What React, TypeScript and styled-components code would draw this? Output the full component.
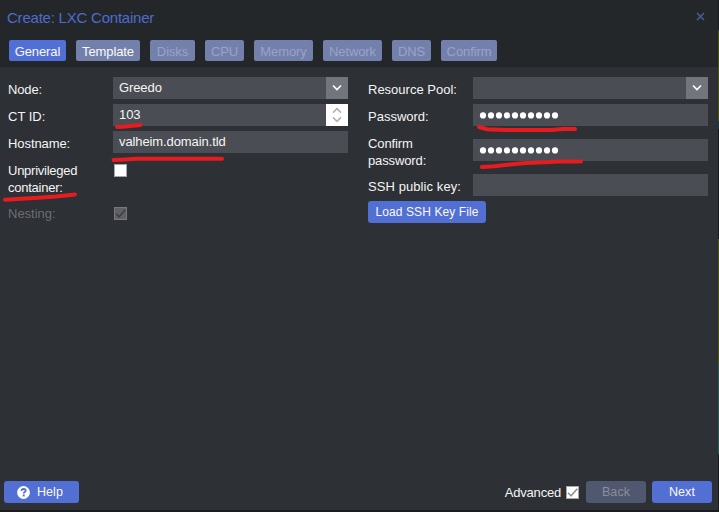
import React from "react";
import styled, { createGlobalStyle } from "styled-components";

const GlobalStyle = createGlobalStyle`
  * { box-sizing: border-box; }
  body { margin: 0; background: #1c1b20; }
  button { font: inherit; border: 0; padding: 0; }
`;

const Screen = styled.div`
  position: relative;
  display: flex;
  width: 719px;
  height: 512px;
  overflow: hidden;
  font: 13px/17px "Liberation Sans", Arial, sans-serif;
  color: #f5f5f5;
  white-space: nowrap;
`;

const Dialog = styled.div`
  display: flex;
  flex-direction: column;
  width: 718px;
  height: 510px;
  background: #2d3035;
`;

const Backdrop = styled.div`
  width: 1px;
  background: linear-gradient(
    #191b20 0 30px, #4c5011 30px 121px, #123c54 121px 129px, #191c1e 129px 239px,
    #50520f 239px 364px, #2b5959 364px 454px, #181b1d 454px
  );
`;

const Header = styled.header`
  display: flex;
  flex-direction: column;
  height: 67px;
  background: #23272a;
`;

const TitleBar = styled.div`
  display: flex;
  justify-content: space-between;
  height: 40px;
  padding: 9px 13px 0 7px;
  font-size: 15px;
  line-height: 18px;
  letter-spacing: -0.22px;
  color: #4f6bcd;
`;

const CloseIcon = styled.svg`
  width: 9px;
  height: 9px;
  margin-top: 3px;
`;

const Tabs = styled.nav`
  display: flex;
  gap: 10px;
  padding-left: 9px;
`;

type TabState = "active" | "ready" | "disabled";

const Tab = styled.button<{ $state: TabState; $width: number }>`
  width: ${(p) => p.$width}px;
  height: 21px;
  padding-top: 2px;
  border-radius: 2px;
  line-height: 19px;
  letter-spacing: -0.1px;
  background: ${(p) => (p.$state === "active" ? "#526fd6" : "#7480ac")};
  color: ${(p) => (p.$state === "disabled" ? "#9aa3c6" : "#fafafa")};
`;

const Form = styled.main`
  display: grid;
  grid-template-columns: 340px 340px;
  column-gap: 20px;
  align-content: start;
  flex: 1;
  padding: 10px 0 0 8px;
`;

const Column = styled.div`
  display: flex;
  flex-direction: column;
  gap: 5px;
`;

const Row = styled.div<{ $dim?: boolean }>`
  display: grid;
  grid-template-columns: 105px 235px;
  align-items: center;
  min-height: 22px;
  color: ${(p) => (p.$dim ? "#6b6d70" : "#f5f5f5")};
`;

const Label = styled.label<{ $tall?: boolean; $spacing?: number }>`
  align-self: start;
  height: ${(p) => (p.$tall ? 38 : 22)}px;
  padding-top: 4px;
  letter-spacing: ${(p) => p.$spacing ?? 0}px;
`;

const Field = styled.div`
  display: flex;
  height: 22px;
  background: #4b4d54;
`;

const Value = styled.span`
  flex: 1;
  padding: 2px 0 0 6px;
  letter-spacing: -0.1px;
`;

const Trigger = styled.button<{ $light?: boolean }>`
  display: flex;
  width: 22px;
  height: 22px;
  background: ${(p) => (p.$light ? "#ffffff" : "#72757b")};
`;

const Dots = styled.svg`
  width: 92px;
  height: 22px;
  fill: #fff;
`;

const Box = styled.span<{ $dim?: boolean; $inField?: boolean }>`
  display: flex;
  align-self: start;
  width: 13px;
  height: 13px;
  margin: ${(p) => (p.$inField ? "6px 0 0 1px" : "0")};
  border: 1px solid ${(p) => (p.$dim ? "#77787b" : "#a6a6a6")};
  background: ${(p) => (p.$dim ? "#5f6164" : "#fff")};
`;

const Action = styled.button<{ $width: number; $disabled?: boolean }>`
  display: flex;
  align-items: center;
  justify-content: center;
  width: ${(p) => p.$width}px;
  height: 22px;
  border-radius: 3px;
  font-size: 12px;
  line-height: 22px;
  letter-spacing: 0.1px;
  background: ${(p) => (p.$disabled ? "#50586f" : "#526fd3")};
  color: ${(p) => (p.$disabled ? "#8b8e98" : "#fafafa")};
`;

const HelpIcon = styled.svg`
  width: 13px;
  height: 13px;
  margin: 0 7px 0 -3px;
`;

const Footer = styled.footer`
  display: flex;
  align-items: flex-start;
  height: 29px;
  padding: 0 6px 0 4px;
`;

const Advanced = styled.label`
  display: flex;
  gap: 5px;
  margin: 3px 7px 0 auto;
  letter-spacing: -0.2px;

  ${Box} { margin-top: 2px; }
`;

const WideAction = styled(Action)`
  font-size: 12.5px;
  letter-spacing: 0.1px;
`;

const Next = styled(WideAction)`
  margin-left: 6px;
`;

const Underlines = styled.svg`
  position: absolute;
  inset: 0;
  width: 719px;
  height: 512px;
  pointer-events: none;
`;

const tabs: { name: string; width: number; state: TabState }[] = [
  { name: "General", width: 57, state: "active" },
  { name: "Template", width: 64, state: "ready" },
  { name: "Disks", width: 45, state: "disabled" },
  { name: "CPU", width: 39, state: "disabled" },
  { name: "Memory", width: 59, state: "disabled" },
  { name: "Network", width: 59, state: "disabled" },
  { name: "DNS", width: 39, state: "disabled" },
  { name: "Confirm", width: 56, state: "disabled" },
];

const Chevron = () => (
  <svg width="22" height="22" fill="none" stroke="#fff" strokeWidth="1.6">
    <path d="M7 8.5l4 4 4-4" />
  </svg>
);

const Spinner = () => (
  <svg width="22" height="22" fill="none" stroke="#b2b2b2" strokeWidth="1.5">
    <path d="M7 8.6l4-4 4 4M7 13.4l4 4 4-4" />
  </svg>
);

const Check = ({ color }: { color: string }) => (
  <svg width="11" height="11" fill="none" stroke={color} strokeWidth="1.6">
    <path d="M1 5.8l3 3L10.300 1.8" />
  </svg>
);

const Password = () => (
  <Field>
    <Dots>
      {Array.from({ length: 10 }, (_, i) => (
        <circle key={i} cx={10 + i * 8} cy={11.4} r={3.1} />
      ))}
    </Dots>
  </Field>
);

export default function App() {
  return (
    <Screen>
      <GlobalStyle />
      <Dialog>
        <Header>
          <TitleBar>
            <span>Create: LXC Container</span>
            <CloseIcon viewBox="0 0 9 9" stroke="#4a5d9d" strokeWidth="1.5">
              <path d="M1 1l7 7M8 1L1 8" />
            </CloseIcon>
          </TitleBar>
          <Tabs>
            {tabs.map((t) => (
              <Tab key={t.name} $width={t.width} $state={t.state}>{t.name}</Tab>
            ))}
          </Tabs>
        </Header>
        <Form>
          <Column>
            <Row>
              <Label $spacing={-0.15}>Node:</Label>
              <Field><Value>Greedo</Value><Trigger><Chevron /></Trigger></Field>
            </Row>
            <Row>
              <Label>CT ID:</Label>
              <Field><Value>103</Value><Trigger $light><Spinner /></Trigger></Field>
            </Row>
            <Row>
              <Label $spacing={-0.08}>Hostname:</Label>
              <Field><Value>valheim.domain.tld</Value></Field>
            </Row>
            <Row>
              <Label $tall $spacing={-0.25}>Unprivileged<br />container:</Label>
              <Box $inField />
            </Row>
            <Row $dim>
              <Label>Nesting:</Label>
              <Box $dim $inField><Check color="#3c3f42" /></Box>
            </Row>
          </Column>
          <Column>
            <Row>
              <Label>Resource Pool:</Label>
              <Field><Value /><Trigger><Chevron /></Trigger></Field>
            </Row>
            <Row>
              <Label>Password:</Label>
              <Password />
            </Row>
            <Row>
              <Label $tall $spacing={-0.12}>Confirm<br />password:</Label>
              <Password />
            </Row>
            <Row>
              <Label $spacing={0.08}>SSH public key:</Label>
              <Field />
            </Row>
            <Action $width={118}>Load SSH Key File</Action>
          </Column>
        </Form>
        <Footer>
          <WideAction $width={75}>
            <HelpIcon viewBox="0 0 13 13">
              <circle cx="6.5" cy="6.5" r="6.4" fill="#fff" />
              <path d="M4.4 4.9c.2-1.3 1-1.9 2.2-1.9 1.3 0 2.1.7 2.1 1.7 0 1.4-2 1.3-2 2.8" fill="none" stroke="#526fd3" strokeWidth="1.8" />
              <path d="M5.7 8.5h2v1.9h-2z" fill="#526fd3" />
            </HelpIcon>
            Help
          </WideAction>
          <Advanced>Advanced<Box><Check color="#929292" /></Box></Advanced>
          <WideAction $width={60} $disabled>Back</WideAction>
          <Next $width={60}>Next</Next>
        </Footer>
      </Dialog>
      <Backdrop />
      <Underlines fill="none" stroke="#e81b1f" strokeWidth="4" strokeLinecap="round" strokeLinejoin="round">
        <path d="M117 127l6-.2 10-1 7.5-.8" />
        <path d="M113.500 160l11-.5 12-.7h85.500" />
        <path d="M5 199.700l16-1 17-.9 18-1.400 19-2" />
        <path d="M479 127l8 2.200 18 .8h46l12-1h12" />
        <path d="M482 167l12-.8 18-1.900 14-1.200 19-.9 14-.6h22" />
      </Underlines>
    </Screen>
  );
}
